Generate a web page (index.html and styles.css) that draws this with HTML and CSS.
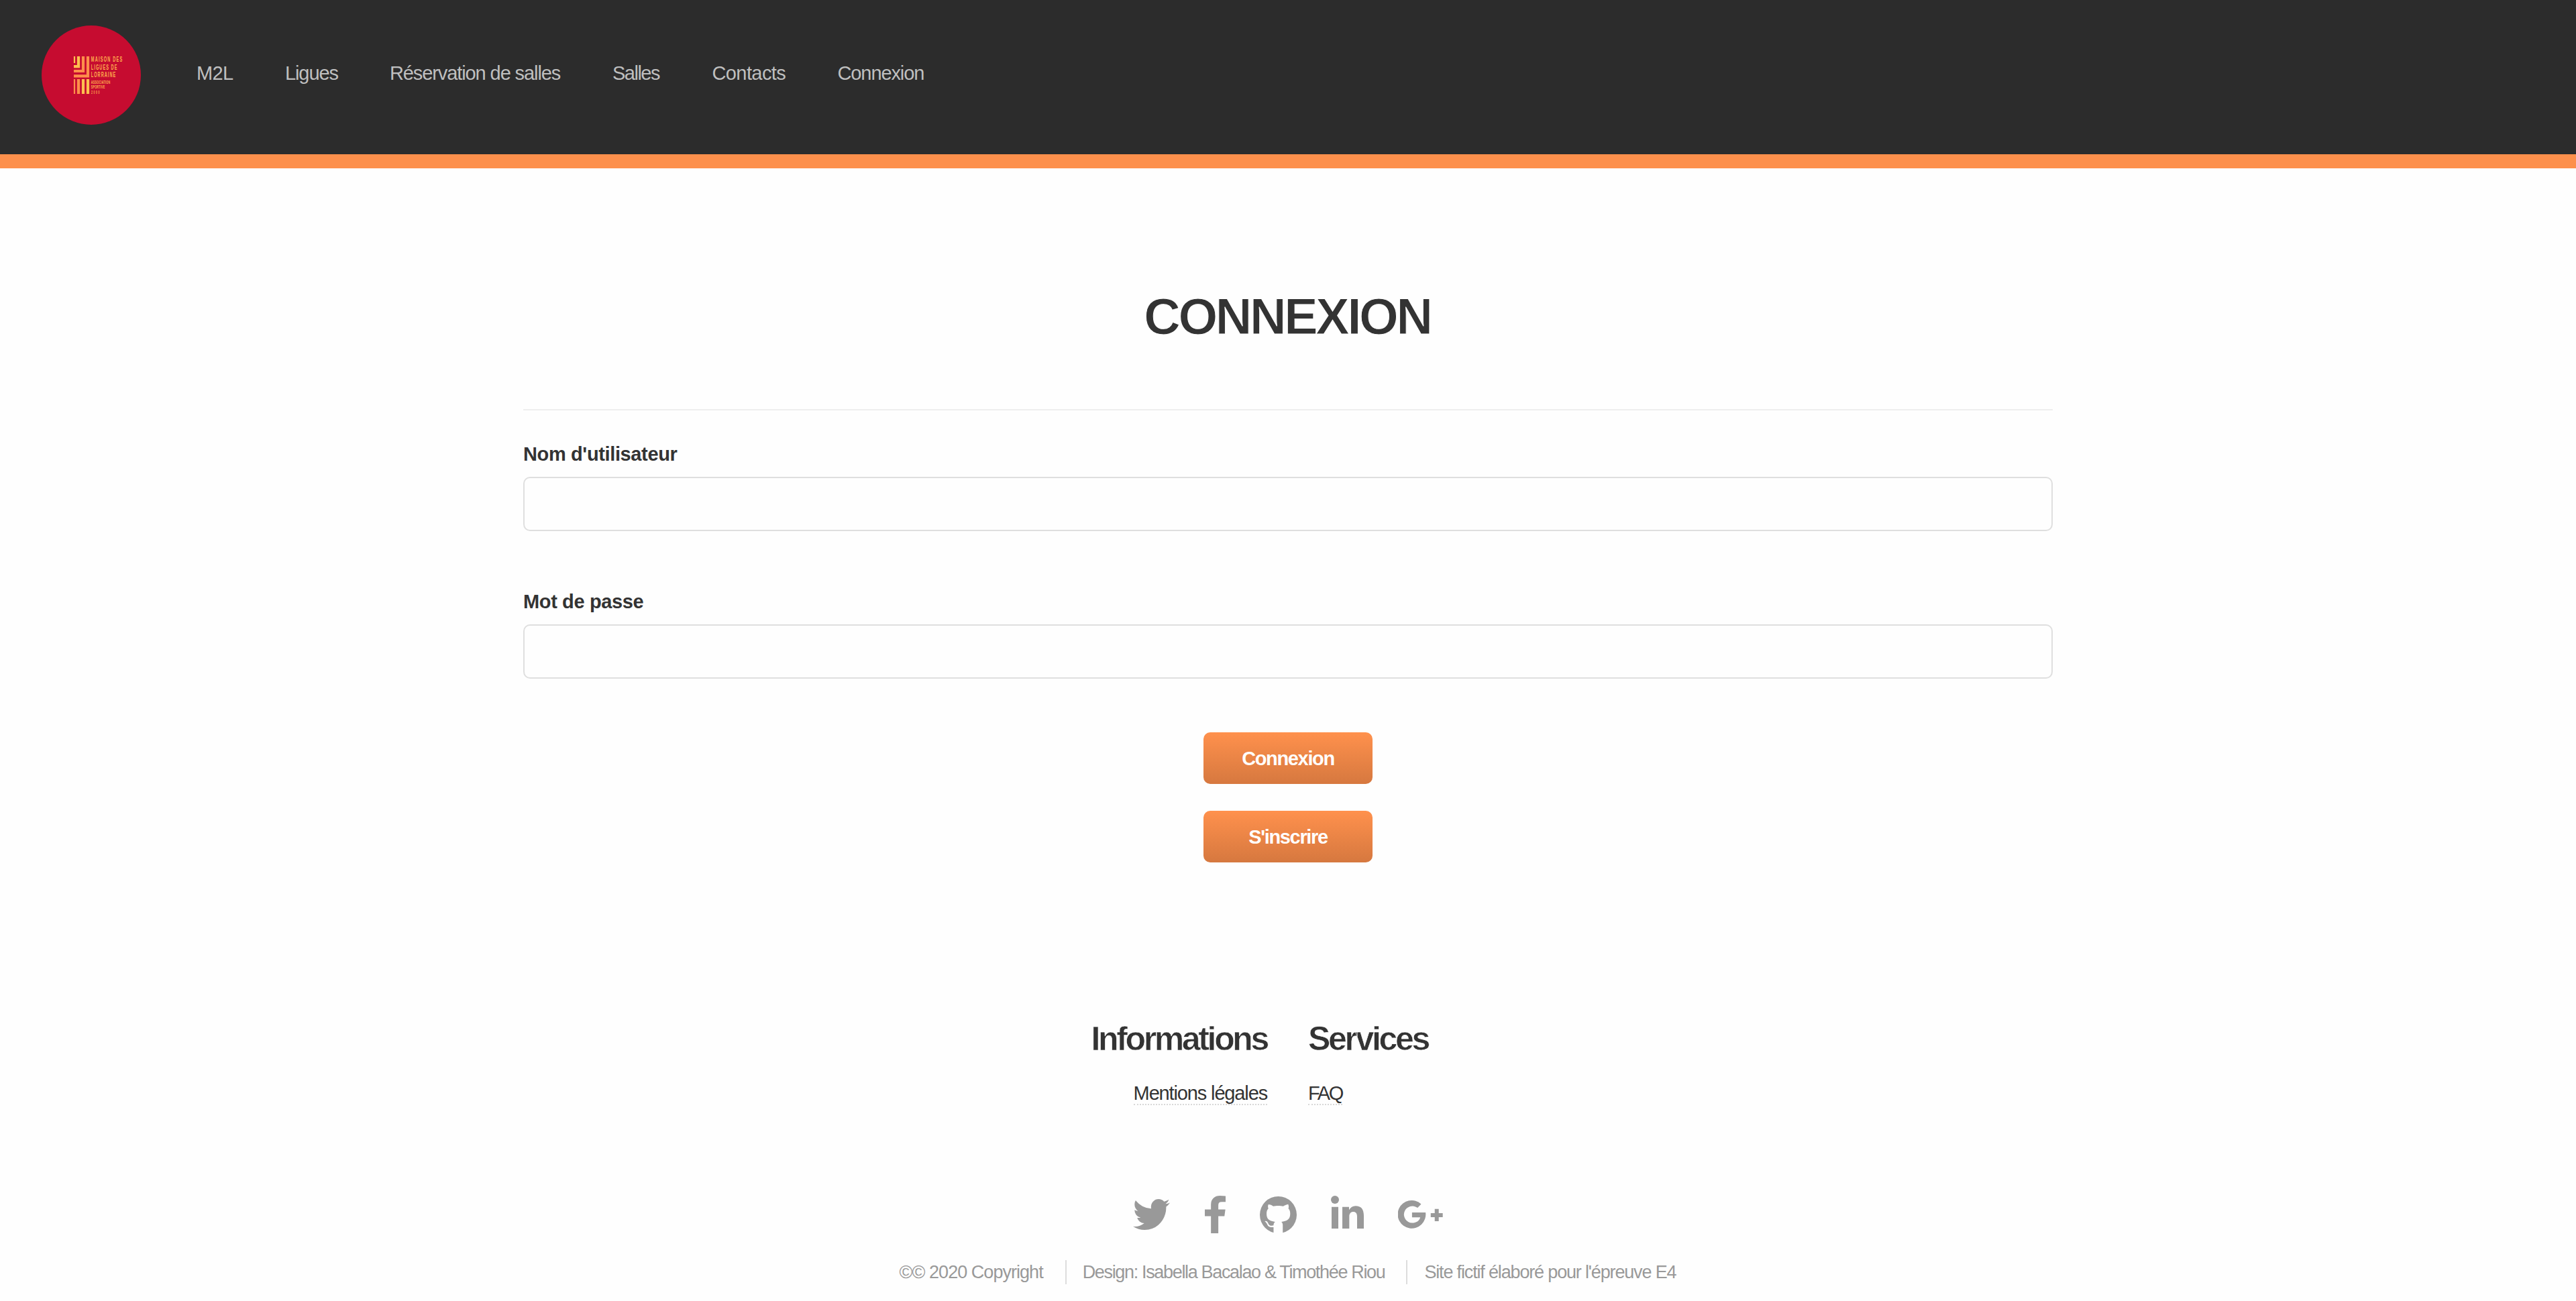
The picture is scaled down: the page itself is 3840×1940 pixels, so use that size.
FILE: index.html
```html
<!DOCTYPE html>
<html lang="fr">
<head>
<meta charset="utf-8">
<title>M2L - Connexion</title>
<link rel="stylesheet" href="styles.css">
</head>
<body>
<header class="header">
  <svg class="logo" viewBox="62 38 148 148" role="img" aria-label="Maison des Ligues de Lorraine">
    <circle cx="136" cy="112" r="74" fill="#c60c30"/>
    <g fill="none" stroke-width="4.2">
      <path d="M111 84V94" stroke="#ffbf4f" stroke-width="2.2"/>
      <path d="M117 84V99.2H110" stroke="#ffbf4f"/>
      <path d="M124 84V106H110" stroke="#ff8f4a"/>
      <path d="M131 84V113.3H110" stroke="#ff8f4a"/>
      <path d="M111 118V140" stroke="#ff8f4a" stroke-width="2.2"/>
      <path d="M117 118V140" stroke="#ff8f4a"/>
      <path d="M124 118V140M131 118V140" stroke="#ffbf4f"/>
    </g>
    <g class="logo-text">
      <text font-size="10" textLength="83" transform="translate(135.8 92.2) scale(.56 1)">MAISON DES</text>
      <text font-size="10" textLength="69" transform="translate(135.8 103.7) scale(.56 1)">LIGUES DE</text>
      <text font-size="10" textLength="65" transform="translate(135.8 115.2) scale(.56 1)">LORRAINE</text>
      <text font-size="7.6" textLength="56" transform="translate(135.8 125) scale(.51 1)">ASSOCIATION</text>
      <text font-size="7.6" textLength="41" transform="translate(135.8 132.2) scale(.5 1)">SPORTIVE</text>
      <text font-size="6.6" textLength="24" transform="translate(136 140.2) scale(.52 1)">2000</text>
    </g>
  </svg>
  <nav class="nav">
    <a class="nav-m2l" href="#">M2L</a>
    <a href="#">Ligues</a>
    <a href="#">Réservation de salles</a>
    <a class="nav-salles" href="#">Salles</a>
    <a class="nav-contacts" href="#">Contacts</a>
    <a href="#">Connexion</a>
  </nav>
</header>

<main class="main">
  <h1>CONNEXION</h1>
  <form class="form">
    <label for="user">Nom d'utilisateur</label>
    <input id="user" type="text">
    <label for="pass">Mot de passe</label>
    <input id="pass" type="password">
    <div class="actions">
      <button type="button">Connexion</button>
      <button type="button">S'inscrire</button>
    </div>
  </form>
</main>

<footer class="footer">
  <div class="columns">
    <section class="informations">
      <h2>Informations</h2>
      <a href="#">Mentions légales</a>
    </section>
    <section class="services">
      <h2>Services</h2>
      <a class="faq" href="#">FAQ</a>
    </section>
  </div>
  <div class="social">
    <svg class="twitter" viewBox="108 256 1576 1280" preserveAspectRatio="none"><path d="M1684 408q-67 98-162 167 1 14 1 42 0 130-38 259.500t-115.500 248.500-184.500 210.500-258 146-323 54.500q-271 0-496-145 35 4 78 4 225 0 401-138-105-2-188-64.500t-114-159.500q33 5 61 5 43 0 85-11-112-23-185.500-111.500t-73.500-205.500v-4q68 38 146 41-66-44-105-115t-39-154q0-88 44-163 121 149 294.500 238.500t371.500 99.500q-8-38-8-74 0-134 94.500-228.500t228.500-94.500q140 0 236 102 109-21 205-78-37 115-142 178 93-10 186-50z"/></svg>
    <svg class="facebook" viewBox="479 0 864 1664" preserveAspectRatio="none"><path d="M1343 12v264h-157q-86 0-116 36t-30 108v189h293l-39 296h-254v759h-306v-759h-255v-296h255v-218q0-186 104-288.500t277-102.500q147 0 228 12z"/></svg>
    <svg class="github" viewBox="0 0 164 164"><circle cx="82" cy="82" r="82"/><path fill="#fefefe" d="M38 36C46 36 54 40 60 44C72 41 92 41 104 44C110 40 118 36 126 35C129 42 129 48 127 54C133 60 135 68 135 77C135 98 126 110 96 113C101 118 102 122 102 128V164H61V137C45 139 37 135 34 127C31 118 26 114 22 111C34 106 36 120 41 126C46 132 54 131 61 129C61 121 63 117 68 113C40 110 30 100 30 77C30 68 32 60 38 54C35 48 36 42 38 36z"/></svg>
    <svg class="linkedin" viewBox="0 0 147 147"><circle cx="18" cy="18" r="18"/><path d="M3 50H33V147H3zM51 50H81V64C88 52 97 46 110 46C135 46 147 60 147 90V147H117V93C117 79 111 72 100 72C89 72 82 80 82 93V147H51z"/></svg>
    <svg class="google" viewBox="0 0 202 126"><path d="M104 16A63 63 0 1 0 124 54H63V76H100C96 92 82 101 63 101A38 38 0 1 1 88 33zM165 38H183V57H201V75H183V93H165V75H147V57H165z"/></svg>
  </div>
  <div class="copyright">
    <span class="copy">©© 2020 Copyright</span>
    <span class="design">Design: Isabella Bacalao &amp; Timothée Riou</span>
    <span class="notice">Site fictif élaboré pour l'épreuve E4</span>
  </div>
</footer>
</body>
</html>
```
FILE: styles.css
```css
* { box-sizing: border-box; }

body {
  margin: 0;
  background: #fefefe;
  color: #333;
  font-family: "Liberation Sans", Arial, sans-serif;
  font-size: 29px;
}

a { color: inherit; text-decoration: none; }

.header {
  display: flex;
  align-items: flex-start;
  height: 251px;
  padding: 38px 0 0 62px;
  background: #2c2c2c;
  border-bottom: 21px solid #fd904c;
}

.logo { width: 148px; height: 148px; }

.logo-text {
  fill: #ffb04d;
  font-family: "Liberation Sans", Arial, sans-serif;
  font-weight: 700;
}

.nav {
  display: grid;
  grid-template-columns: 132px 156px 332px 148.500px 187px auto;
  margin: 51px 0 0 83px;
  color: #bfbfbf;
  line-height: 40px;
  letter-spacing: -1.100px;
  white-space: nowrap;
}

.nav-m2l { letter-spacing: -.6px; }
.nav-salles { letter-spacing: -1.500px; }
.nav-contacts { letter-spacing: -.6px; }

.main {
  width: 2280px;
  margin: 0 auto;
  padding-top: 176px;
}

h1 {
  margin: 0 0 93px;
  padding-right: 2px;
  font-size: 75.500px;
  line-height: 90px;
  letter-spacing: -3.300px;
  text-align: center;
  -webkit-text-stroke: 1px #fefefe;
}

.form {
  display: flex;
  flex-direction: column;
  padding-top: 45px;
  border-top: 2px solid #eee;
}

label {
  margin-bottom: 14px;
  font-weight: 700;
  line-height: 40px;
  letter-spacing: -.37px;
}

input {
  height: 81px;
  margin: 0 0 85px;
  padding: 0 28px;
  border: 2px solid #dfdfdf;
  border-radius: 10px;
  background: transparent;
  font: inherit;
}

#pass { margin-bottom: 80px; }

.actions {
  display: flex;
  flex-direction: column;
  align-items: center;
  gap: 40px;
}

button {
  width: 252px;
  height: 77px;
  padding: 2px 0 0;
  border: 0;
  border-radius: 10px;
  background: linear-gradient(#ff914d, #d6783f);
  color: #fff;
  font: 700 29px "Liberation Sans", Arial, sans-serif;
  letter-spacing: -1.350px;
}

.footer { padding-top: 233px; }

.columns {
  display: grid;
  grid-template-columns: 1889px 1fr;
  column-gap: 61px;
}

.informations { text-align: right; }

h2 {
  margin: 0 0 34px;
  font-size: 50px;
  line-height: 60px;
  letter-spacing: -3.350px;
  -webkit-text-stroke: .6px #fefefe;
}

.columns a {
  display: inline-block;
  padding-top: 1px;
  border-bottom: 2px dotted #d8d8d8;
  line-height: 32px;
  letter-spacing: -1.140px;
  vertical-align: top;
}

.columns .faq { letter-spacing: -2.400px; }

.social {
  display: flex;
  justify-content: center;
  align-items: flex-start;
  gap: 51px;
  height: 56px;
  margin-top: 135px;
  fill: #999;
}

.twitter { width: 55px; height: 46px; margin: 5px 1px 0 0; }
.facebook { width: 31px; height: 56px; }
.github { width: 55px; height: 55px; margin-top: 1px; }
.linkedin { width: 49px; height: 49px; }
.google { width: 67px; height: 42px; margin-top: 7px; }

.copyright {
  display: flex;
  justify-content: center;
  margin-top: 40px;
  color: #999;
  font-size: 27px;
  line-height: 36px;
  white-space: nowrap;
}

.copy { letter-spacing: -.96px; }
.design { margin-left: 33px; padding-left: 24px; border-left: 2px solid #ddd; letter-spacing: -1.340px; }
.notice { margin-left: 32px; padding: 0 1px 0 25px; border-left: 2px solid #ddd; letter-spacing: -1.160px; }
```
